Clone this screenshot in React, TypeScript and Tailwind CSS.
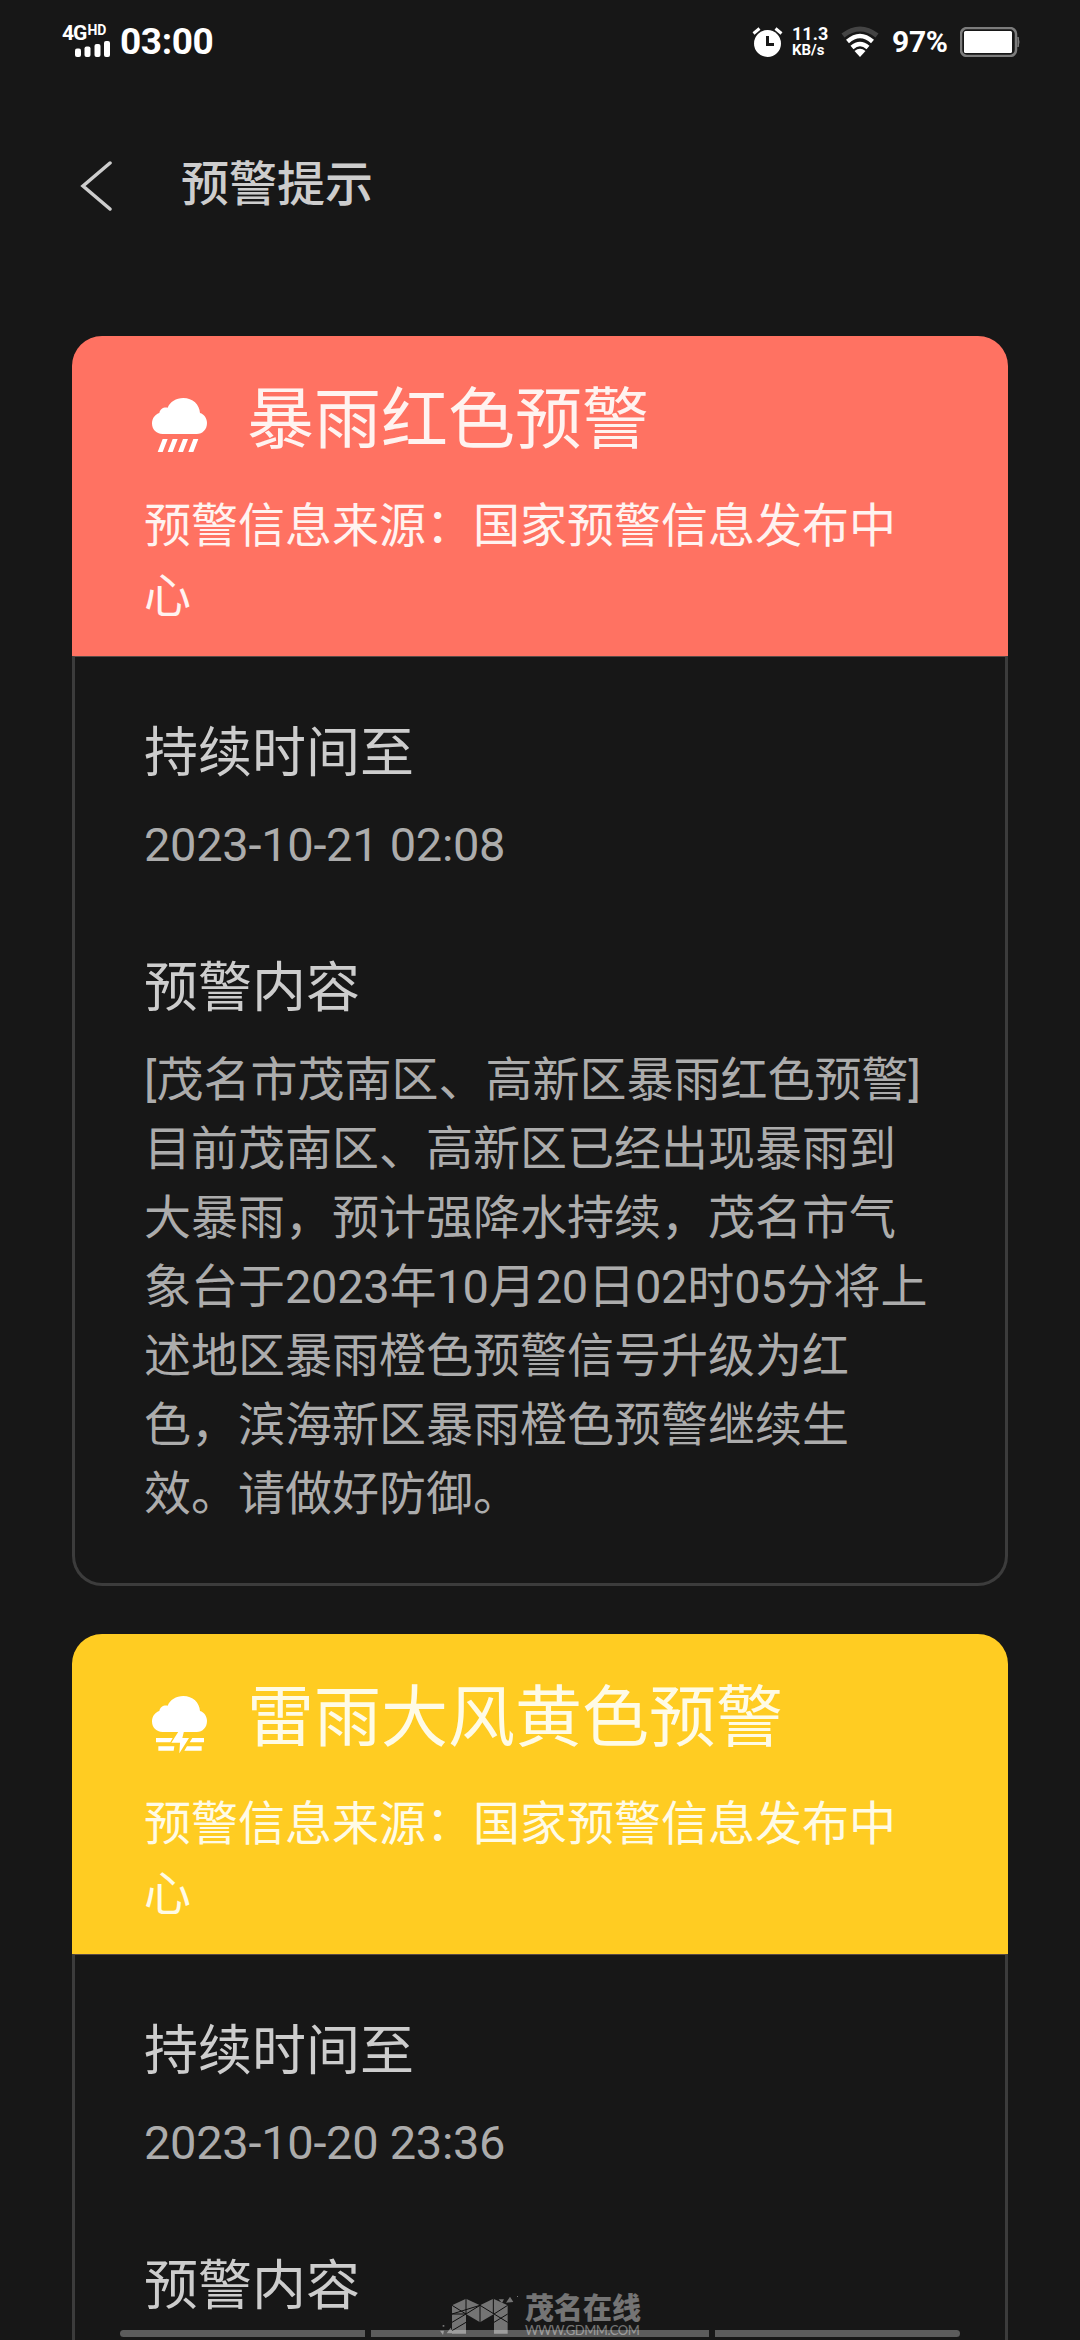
import React from 'react';

interface Warning {
  title: string;
  headerClass: string;
  textClass: string;
  source: string;
  until: string;
  lines: string[];
  icon: 'rain' | 'thunder';
}

const warnings: Warning[] = [
  {
    title: '暴雨红色预警',
    headerClass: 'bg-[#ff7262]',
    textClass: 'text-[#fff3f0]',
    source: '预警信息来源：国家预警信息发布中心',
    until: '2023-10-21 02:08',
    lines: [
      '[茂名市茂南区、高新区暴雨红色预警]',
      '目前茂南区、高新区已经出现暴雨到',
      '大暴雨，预计强降水持续，茂名市气',
      '象台于2023年10月20日02时05分将上',
      '述地区暴雨橙色预警信号升级为红',
      '色，滨海新区暴雨橙色预警继续生',
      '效。请做好防御。',
    ],
    icon: 'rain',
  },
  {
    title: '雷雨大风黄色预警',
    headerClass: 'bg-[#ffcc22]',
    textClass: 'text-[#fffbe6]',
    source: '预警信息来源：国家预警信息发布中心',
    until: '2023-10-20 23:36',
    lines: [],
    icon: 'thunder',
  },
];

const WeatherIcon: React.FC<{ type: Warning['icon'] }> = ({ type }) => (
  <svg width="60" height="60" viewBox="57 45 180 180" fill="#fff">
    <path d="M98 162C78 162 66 148 66 130C66 114 76 103 88 99C90 87 100 81 113 83C120 66 138 54 160 54C188 54 209 74 210 99C223 103 231 115 231 129C231 148 218 162 200 162Z" />
    {type === 'rain' ? (
      <path d="M98 177h15l-15 39H83zM128 177h15l-15 39h-15zM159 177h15l-15 39h-15zM190 177h15l-15 39h-15z" />
    ) : (
      <path d="M146 160h16l-5 20h20l-29 46 2-32h-26zM78 180h50l-7 13H78zM85 205h48l-2 13H85zM187 180h35v13h-43zM171 205h44v13h-52z" />
    )}
  </svg>
);

const StatusBar = () => (
  <div className="flex h-[83px] shrink-0 items-center text-white">
    <div className="ml-[62px] flex h-[34px] w-[49px] flex-col">
      <div className="flex h-[16px] items-start text-[21px] font-bold leading-[17px] tracking-[-1px]">
        4G<span className="ml-px text-[14px] leading-[11px] tracking-normal">HD</span>
      </div>
      <svg className="ml-[12px]" width="36" height="17" fill="#fff">
        <rect x="1" y="7.500" width="6" height="8.500" rx="2" />
        <rect x="10.500" y="5.500" width="6" height="10.500" rx="2" />
        <rect x="20.500" y="3" width="6" height="13" rx="2" />
        <rect x="30" y="0" width="6" height="16" rx="2" />
      </svg>
    </div>
    <span className="ml-[9px] text-[37px] font-bold leading-none tracking-[-0.4px]">03:00</span>
    <svg className="ml-auto" width="32" height="32" viewBox="0 0 32 32">
      <circle cx="15.500" cy="17.500" r="13.500" fill="#fff" />
      <path d="M1.500 7.500l6-5M29.500 7.500l-6-5" stroke="#fff" strokeWidth="3" />
      <path d="M15.500 10v8.500h6.500" stroke="#171717" strokeWidth="3" fill="none" />
    </svg>
    <div className="ml-[8px] flex w-[36px] flex-col text-[18px] font-bold leading-[16px]">
      <span>11.3</span>
      <span className="text-[15px]">KB/s</span>
    </div>
    <svg className="ml-[13px]" width="38" height="32" viewBox="0 0 38 32" fill="none">
      <path d="M2 9.500Q19-3.500 36 9.500" stroke="#444" strokeWidth="5" />
      <path d="M6.500 15.500Q19 4.500 31.500 15.500" stroke="#fff" strokeWidth="4.500" />
      <path d="M11 21.500Q19 14.500 27 21.500" stroke="#fff" strokeWidth="4.500" />
      <path d="M19 31l-5.500-6Q19 20.500 24.500 25z" fill="#fff" />
    </svg>
    <span className="ml-[13px] w-[57px] text-[30px] font-bold leading-none tracking-[-0.3px]">97%</span>
    <svg className="ml-[11px] mr-[60px]" width="60" height="30" viewBox="0 0 60 30">
      <rect x="1" y="1" width="55" height="28" rx="6" fill="none" stroke="#7c7c7c" strokeWidth="2.500" />
      <rect x="4" y="4" width="48" height="22" rx="1.500" fill="#fff" />
      <path d="M58 10q2 5 0 10z" fill="#7c7c7c" stroke="#7c7c7c" />
    </svg>
  </div>
);

// Roboto digits sit slightly tighter than the Chinese text around them
const MixedLine: React.FC<{ text: string }> = ({ text }) => (
  <p>
    {text.split(/(\d+)/).map((part, index) =>
      /^\d+$/.test(part) ? (
        <span key={index} className="tracking-[-0.3px]">{part}</span>
      ) : (
        part
      )
    )}
  </p>
);

const WarningCard: React.FC<{ warning: Warning }> = ({ warning }) => (
  <section className="flex shrink-0 flex-col">
    <div className={`flex h-[320px] flex-col rounded-t-[30px] pl-[72px] ${warning.headerClass}`}>
      <div className="mt-[42px] flex h-[84px] items-start">
        <div className="ml-[5px] mt-[17px]">
          <WeatherIcon type={warning.icon} />
        </div>
        <h2 className={`ml-[38px] text-[67px] leading-[84px] ${warning.textClass}`}>{warning.title}</h2>
      </div>
      <p className={`mt-[29px] w-[780px] text-[47px] leading-[70px] ${warning.textClass}`}>
        {warning.source}
      </p>
    </div>
    <div className="rounded-b-[30px] border-x-3 border-b-3 border-t border-[#3c3c3c] border-t-[#5a4a46] pb-[55px] pl-[69px]">
      <h3 className="mt-[61px] text-[54px] leading-[72px] text-[#cdcdcd]">持续时间至</h3>
      <p className="mt-[20px] text-[47px] leading-[70px] tracking-[-0.3px] text-[#acacac]">{warning.until}</p>
      <h3 className="mt-[73px] text-[54px] leading-[72px] text-[#cdcdcd]">预警内容</h3>
      <div className="mt-[20px] whitespace-nowrap text-[47px] leading-[69px] text-[#acacac]">
        {warning.lines.map((line) => (
          <MixedLine key={line} text={line} />
        ))}
      </div>
    </div>
  </section>
);

const Watermark = () => (
  <div className="absolute left-[440px] top-[2295px] flex h-[42px] items-start opacity-40">
    <svg width="80" height="40" viewBox="30 15 240 120">
      <path
        d="M66 46L108 26L150 46L190 26L233 46V131H192V72L150 97L108 72V131H66Z"
        fill="#fff"
      />
      <path
        d="M108 26V72M150 46V97M190 26V72M66 46L108 72L66 97M66 72L150 46M66 72L108 72M150 46L108 72M150 46L233 97M192 72L233 46M66 122L108 97M192 97L233 72"
        stroke="#000"
        strokeWidth="3"
        fill="none"
      />
      <path d="M206 28h16l-6 11zM228 38l12-18 10 16zM30 122h12l-3 13zM50 130l12-17 8 17zM38 105h5v5h-5zM261 18h3v3h-3z" fill="#fff" />
    </svg>
    <div className="ml-[5px] flex flex-col text-white">
      <span className="text-[29px] font-black leading-[29px]">茂名在线</span>
      <span className="mt-px font-[Lato,sans-serif] text-[13px] leading-[11px] tracking-[-0.45px]">WWW.GDMM.COM</span>
    </div>
  </div>
);

export default function App() {
  return (
    <main className="relative flex h-[2340px] w-[1080px] flex-col overflow-hidden bg-[#171717] font-[Roboto,'Noto_Sans_CJK_SC',sans-serif]">
      <StatusBar />
      <header className="flex h-[253px] shrink-0 items-start">
        <svg className="ml-[80px] mt-[77px]" width="32" height="52" fill="none">
          <path d="M30 3L3 26l27 23" stroke="#cdcdcd" strokeWidth="3.500" strokeLinecap="round" />
        </svg>
        <h1 className="ml-[69px] mt-[66px] text-[48px] font-medium leading-[72px] text-[#cdcdcd]">预警提示</h1>
      </header>
      <div className="flex shrink-0 flex-col gap-[48px] px-[72px]">
        {warnings.map((warning) => (
          <WarningCard key={warning.title} warning={warning} />
        ))}
      </div>
      {/* Gesture bar */}
      <div className="absolute bottom-0 left-[120px] flex h-[10px] gap-[6px]">
        <div className="h-[7px] w-[245px] rounded-l-full bg-[#5c5c5c]" />
        <div className="h-[7px] w-[338px] bg-[#5c5c5c]" />
        <div className="h-[7px] w-[245px] rounded-r-full bg-[#5c5c5c]" />
      </div>
      <Watermark />
    </main>
  );
}
